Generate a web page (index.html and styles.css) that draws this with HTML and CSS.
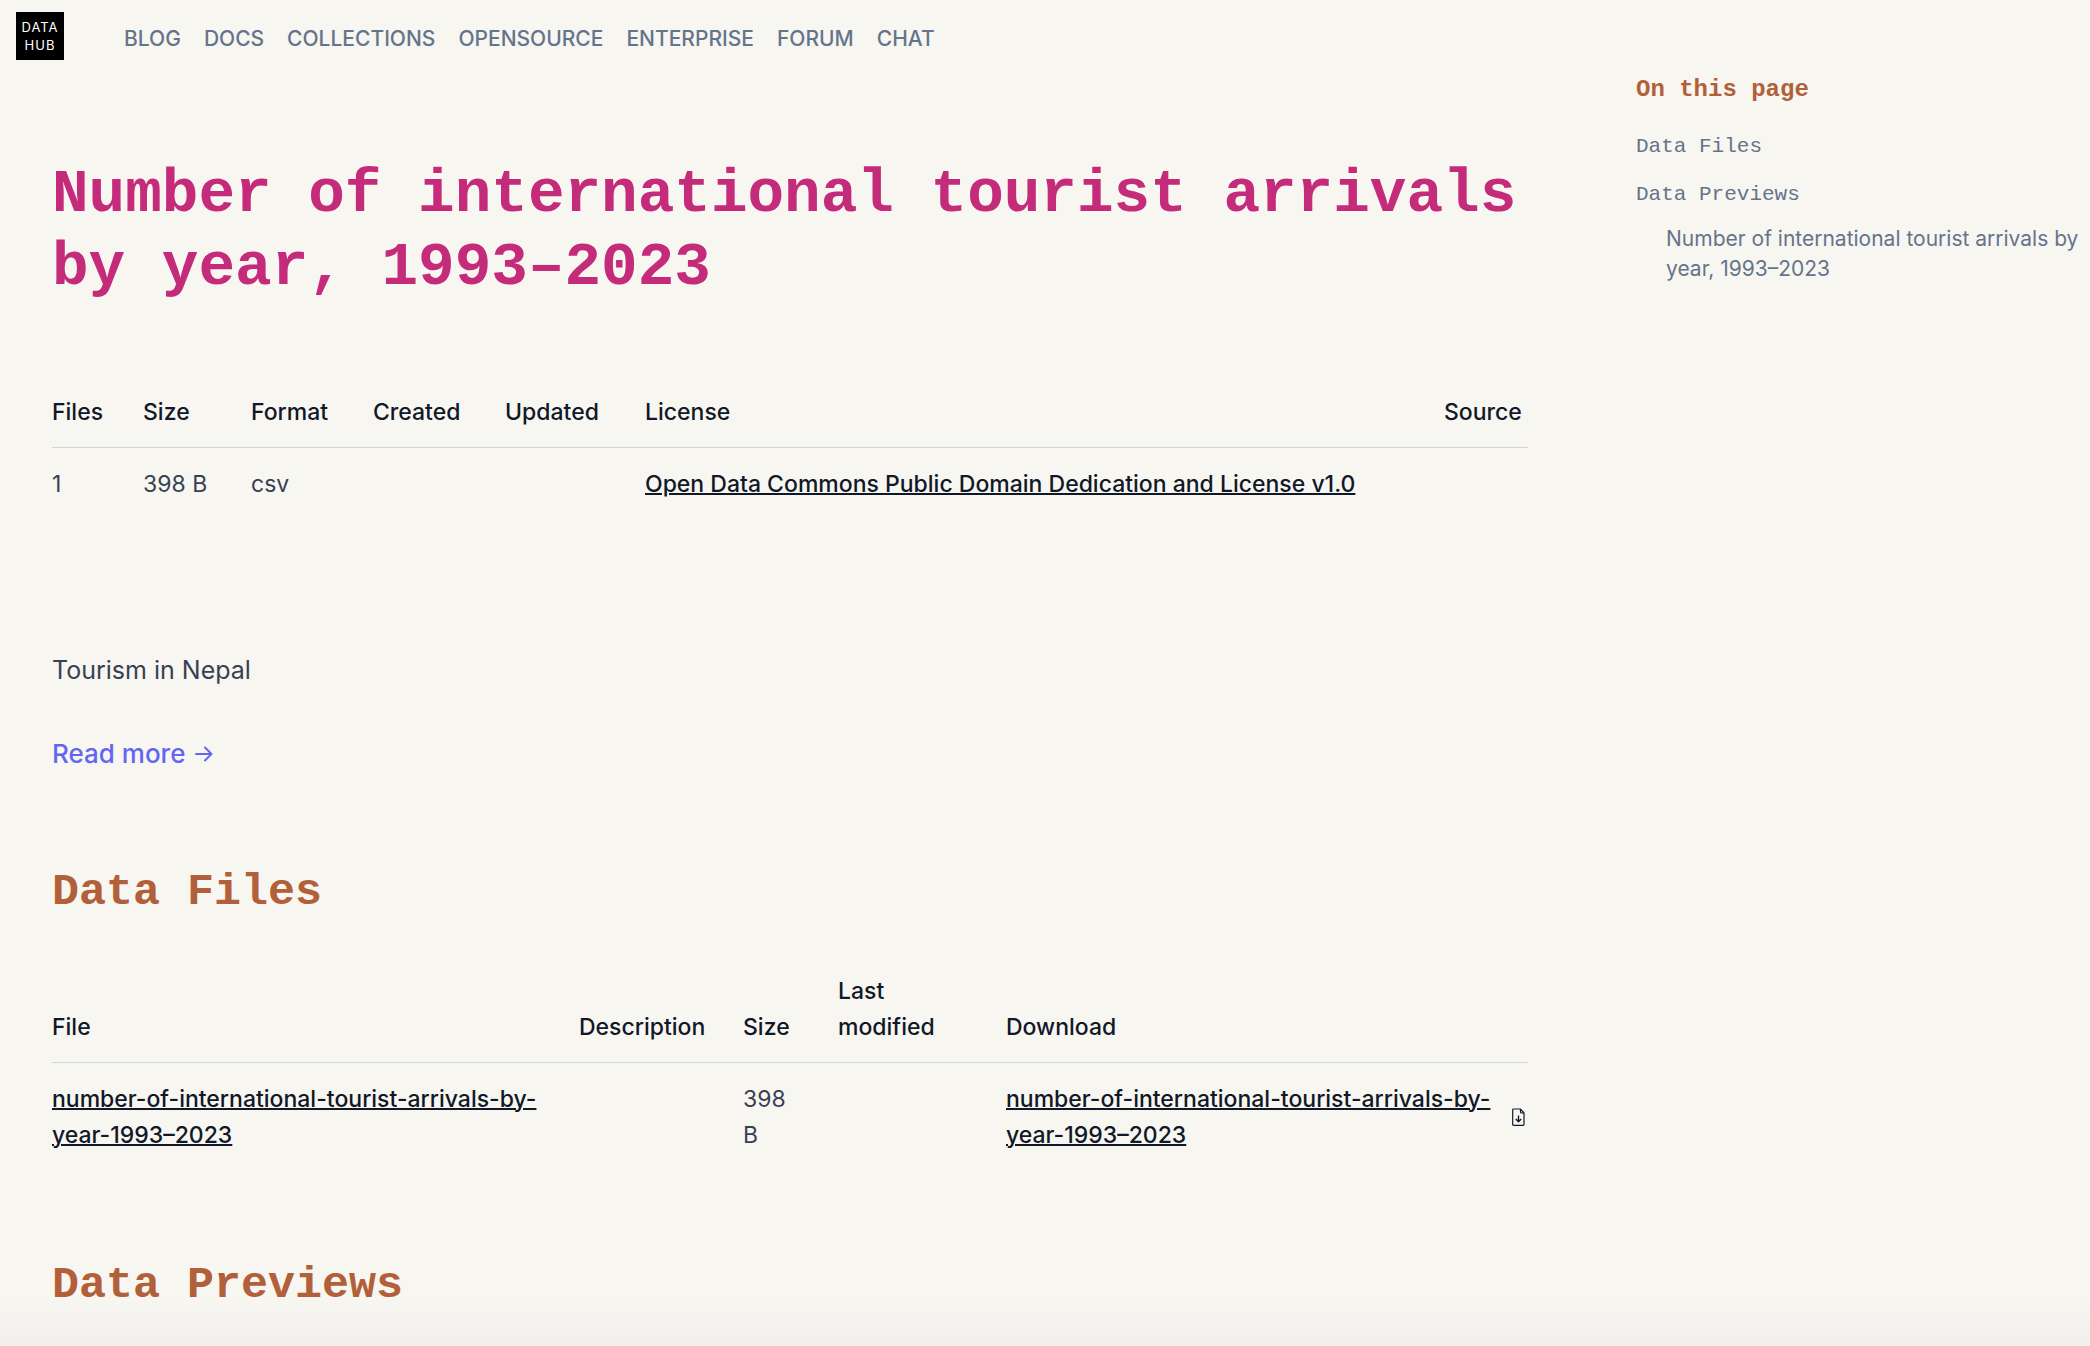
FILE: index.html
```html
<!DOCTYPE html>
<html lang="en">
<head>
  <meta charset="utf-8">
  <meta name="viewport" content="width=device-width, initial-scale=1">
  <title>Number of international tourist arrivals by year, 1993–2023</title>
  <link rel="stylesheet" href="styles.css">
</head>
<body>
  <header class="site-header">
    <a class="logo" href="#" aria-label="DataHub home">
      <svg width="48" height="48" viewBox="0 0 48 48" aria-hidden="true">
        <rect width="48" height="48" fill="#000"/>
        <text class="logo-text" x="24" y="20" text-anchor="middle">DATA</text>
        <text class="logo-text" x="24" y="38" text-anchor="middle">HUB</text>
      </svg>
    </a>
    <nav class="site-nav" aria-label="Main">
      <a href="#">BLOG</a>
      <a href="#">DOCS</a>
      <a href="#">COLLECTIONS</a>
      <a href="#">OPENSOURCE</a>
      <a href="#">ENTERPRISE</a>
      <a href="#">FORUM</a>
      <a href="#">CHAT</a>
    </nav>
  </header>

  <div class="layout">
    <main class="content">
      <h1 class="title">Number of international tourist arrivals by year, 1993–2023</h1>

      <table class="data-table">
        <colgroup>
          <col class="col-files"><col class="col-size"><col class="col-format"><col class="col-created"><col class="col-updated"><col><col class="col-source">
        </colgroup>
        <thead>
          <tr>
            <th scope="col">Files</th>
            <th scope="col">Size</th>
            <th scope="col">Format</th>
            <th scope="col">Created</th>
            <th scope="col">Updated</th>
            <th scope="col">License</th>
            <th scope="col">Source</th>
          </tr>
        </thead>
        <tbody>
          <tr>
            <td>1</td>
            <td>398 B</td>
            <td>csv</td>
            <td></td>
            <td></td>
            <td><a class="table-link" href="#">Open Data Commons Public Domain Dedication and License v1.0</a></td>
            <td></td>
          </tr>
        </tbody>
      </table>

      <div class="summary">
        <p>Tourism in Nepal</p>
        <a class="read-more" href="#">Read more
          <svg width="18" height="16" viewBox="0 0 18 16" fill="none" stroke="currentColor" stroke-width="2" stroke-linecap="round" stroke-linejoin="round" aria-hidden="true"><path d="M1 8h15.500M10 1.500L16.500 8 10 14.500"/></svg>
        </a>
      </div>

      <h2 class="section-title" id="data-files">Data Files</h2>

      <table class="data-table">
        <colgroup>
          <col><col class="col-description"><col class="col-bytes"><col class="col-modified"><col class="col-download">
        </colgroup>
        <thead>
          <tr>
            <th scope="col">File</th>
            <th scope="col">Description</th>
            <th scope="col">Size</th>
            <th scope="col" class="cell-narrow">Last modified</th>
            <th scope="col">Download</th>
          </tr>
        </thead>
        <tbody>
          <tr>
            <td class="cell-narrow"><a class="table-link" href="#">number-of-international-tourist-arrivals-by-year-1993–2023</a></td>
            <td></td>
            <td class="cell-narrow">398 B</td>
            <td></td>
            <td>
              <div class="download">
                <a class="table-link" href="#">number-of-international-tourist-arrivals-by-year-1993–2023</a>
                <svg class="download-icon" width="13" height="18" viewBox="0 0 13 18" fill="none" stroke="currentColor" aria-hidden="true"><path d="M1.500 1h7L12 5v11.500q0 .8-.8.8H1.500q-.8 0-.8-.8V1.800q0-.8.8-.8zM8.500 1v3.200q0 .8.800.8H12" stroke-width="1.200"/><path d="M6.500 7.500v6M3.800 11l2.700 2.700L9.200 11" stroke-width="1.400"/></svg>
              </div>
            </td>
          </tr>
        </tbody>
      </table>

      <h2 class="section-title" id="data-previews">Data Previews</h2>
    </main>

    <aside class="toc">
      <h2 class="toc-title">On this page</h2>
      <nav aria-label="On this page">
        <ul class="toc-list">
          <li><a href="#data-files">Data Files</a></li>
          <li>
            <a href="#data-previews">Data Previews</a>
            <ul class="toc-sublist">
              <li><a href="#data-previews">Number of international tourist arrivals by year, 1993–2023</a></li>
            </ul>
          </li>
        </ul>
      </nav>
    </aside>
  </div>
</body>
</html>
```
FILE: styles.css
```css
* {
  box-sizing: border-box;
}

body {
  margin: 0;
  min-height: 100vh;
  background: linear-gradient(to top, #f1f0ec, #f8f6f1 48px) #f8f6f1;
  color: #374151;
  font-family: Inter, "Liberation Sans", sans-serif;
  font-size: 23px;
  line-height: 36px;
}

a {
  color: inherit;
  text-decoration: none;
}

.site-header {
  display: flex;
  align-items: center;
  gap: 60px;
  height: 72px;
  padding: 0 16px;
}

.logo {
  display: block;
  height: 48px;
}

.logo-text {
  fill: #fff;
  font-size: 13px;
  letter-spacing: 1px;
}

.site-nav {
  display: flex;
  flex-wrap: wrap;
  gap: 23px;
  padding-top: 6px;
  color: #64748b;
  font-size: 21px;
  font-weight: 500;
  line-height: 28px;
}

.layout {
  display: grid;
  grid-template-columns: minmax(0, 1fr) 454px;
  column-gap: 108px;
}

.content {
  padding-left: 52px;
}

.title {
  margin: 86px 0 90px;
  color: #c42b7a;
  font: bold 61px/73px "Liberation Mono", monospace;
}

.data-table {
  width: 100%;
  border-collapse: collapse;
  table-layout: fixed;
  font-size: 23px;
}

.data-table th {
  padding: 0 0 17px;
  border-bottom: 1px solid #d1d5db;
  color: #111827;
  font-weight: 500;
  text-align: left;
  vertical-align: bottom;
}

.data-table td {
  padding: 18px 0;
  vertical-align: baseline;
}

.col-files { width: 91px; }
.col-size { width: 108px; }
.col-format { width: 122px; }
.col-created { width: 132px; }
.col-updated { width: 140px; }
.col-source { width: 84px; }
.col-description { width: 164px; }
.col-bytes { width: 95px; }
.col-modified { width: 168px; }
.col-download { width: 522px; }

.data-table .cell-narrow {
  padding-right: 32px;
}

.table-link {
  color: #111827;
  font-weight: 500;
  text-decoration: underline;
  text-decoration-thickness: 2px;
}

.download {
  display: flex;
  align-items: center;
  justify-content: space-between;
  gap: 12px;
  padding-right: 3px;
}

.download-icon {
  flex: none;
  color: #111827;
}

.summary {
  margin-top: 132px;
  font-size: 25px;
}

.summary p {
  margin: 0 0 48px;
}

.read-more {
  display: inline-flex;
  align-items: center;
  gap: 10px;
  color: #6366f1;
  font-size: 26px;
  font-weight: 500;
}

.section-title {
  margin: 94px 0 53px;
  color: #b1603a;
  font: bold 45px/54px "Liberation Mono", monospace;
}

.data-table + .section-title {
  margin: 88px 0 0;
}

.toc {
  padding-right: 8px;
  color: #64748b;
}

.toc-title {
  margin: 2px 0 26px;
  color: #b1603a;
  font: bold 24px/32px "Liberation Mono", monospace;
}

.toc-list,
.toc-sublist {
  margin: 0;
  padding: 0;
  list-style: none;
}

.toc-list {
  display: grid;
  gap: 18px;
  font: 21px/30px "Liberation Mono", monospace;
}

.toc-sublist {
  padding: 14px 0 0 30px;
  font-family: Inter, "Liberation Sans", sans-serif;
}
```
